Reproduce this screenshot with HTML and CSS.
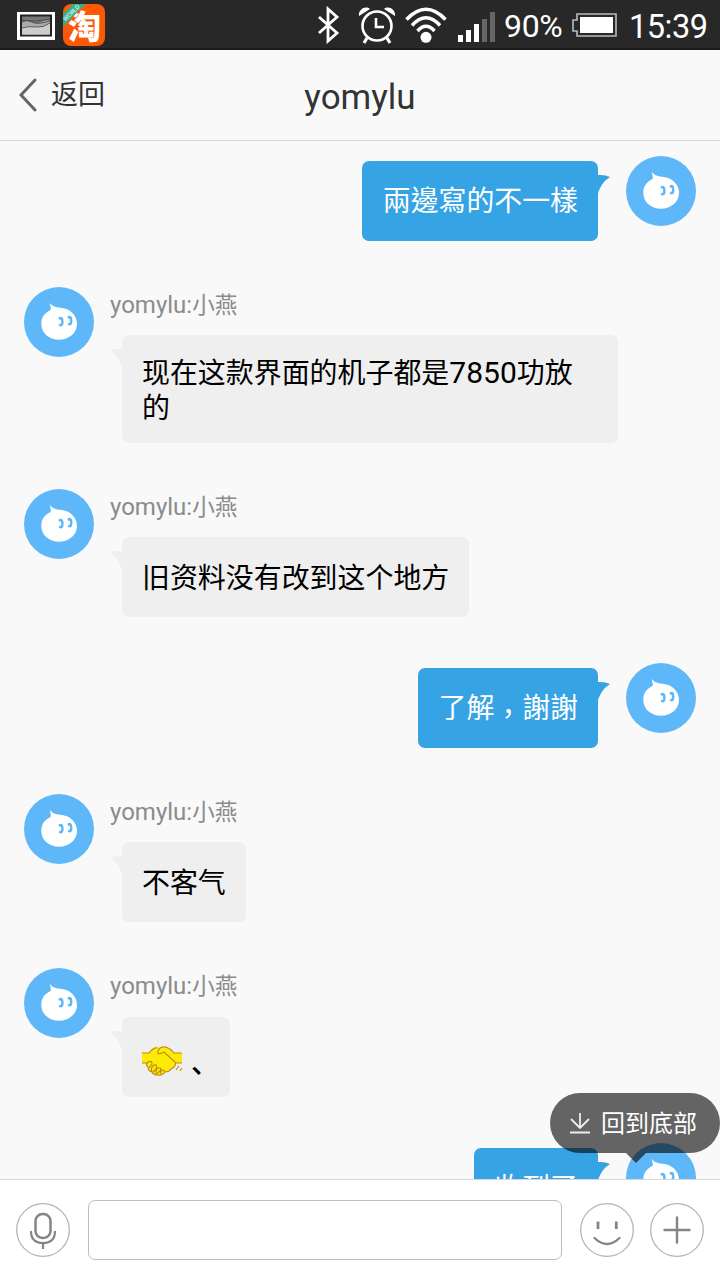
FILE: index.html
```
<!DOCTYPE html>
<html lang="zh-CN">
<head>
<meta charset="utf-8">
<title>yomylu</title>
<link rel="stylesheet" href="styles.css">
</head>
<body>
<svg class="defs" aria-hidden="true">
  <symbol id="avatar" viewBox="0 0 70 70">
    <circle cx="35" cy="35" r="35" fill="#5eb7f8"/>
    <path d="M25.700 16C29 20 33 20.500 38 21C47 22 53 29 53 37C53 46 45 52.700 35 52.700C25 52.700 17.300 46 17.300 37C17.300 30 20.500 26 26.500 23C27.500 21 26 18 25.700 16Z" fill="#fff"/>
    <path d="M35 32Q38.200 29.200 38.400 34.500T35.200 37.500M44 31Q47 28.400 47.200 33.500T44.300 36.500" fill="none" stroke="#5eb7f8" stroke-width="2.500"/>
  </symbol>
  <symbol id="tail-left" viewBox="0 0 13 24"><path d="M0 1.500Q5-.5 13 0V24Q10 7 0 1.500Z" fill="#efefef"/></symbol>
  <symbol id="tail-right" viewBox="0 0 13 24"><path d="M0 0Q8-.3 13 2Q3 8 0 22Z" fill="#35a3e4"/></symbol>
</svg>
<div class="screen">
  <div class="status">
    <svg class="picture" width="38" height="28" viewBox="0 0 38 28"><path d="M0 0h38v28H0z" fill="#fff"/><path d="M3 2.500h32v22H3z" fill="#222"/><path d="M5 4.500h28v18H5z" fill="#777"/><path d="M5 10q5-3 10 0t10 0 8-1v13.500H5z" fill="#aaa"/><path d="M5 16q7-2 14-1t14-4v11.500H5z" fill="#ccc"/><path d="M5 8q8 1 12 1t16-2M5 10q5-3 10 0t18-1M5 16q7-2 14-1t14-4" fill="none" stroke="#444" stroke-width=".8"/></svg>
    <div class="app"><span class="glyph">淘</span><span class="ribbon">WORLD</span></div>
    <svg class="bluetooth" width="22" height="38" viewBox="0 0 22 38" fill="none" stroke="#fff" stroke-width="2.800"><path d="M1 11L19 27 10 35V3L19 11 1 27"/></svg>
    <svg class="alarm" width="38" height="38" viewBox="0 0 38 38" fill="none" stroke="#fff"><circle cx="19" cy="20" r="14.500" stroke-width="2.600"/><path d="M18 12v9h8" stroke-width="2.600"/><path d="M9 32l-3 5M29 32l3 5" stroke-width="3.200"/><path d="M1 10C0 4 7-1 12 3ZM37 10C38 4 31-1 26 3Z" fill="#fff" stroke="none"/></svg>
    <svg class="wifi" width="42" height="36" viewBox="0 0 42 36" fill="none" stroke="#fff" stroke-width="3.500"><path d="M1.500 12.500Q21-8 40.500 12.500M7 18.500Q21 3 35 18.500M12.500 24Q21 14.500 29.500 24"/><circle cx="21" cy="30.300" r="5.500" fill="#fff" stroke="none"/></svg>
    <svg class="signal" width="38" height="30" viewBox="0 0 38 30"><path d="M0 23h5v7H0zM8 18h5v12H8zM16 12h5v18h-5z" fill="#fff"/><path d="M24 7h5v23h-5zM32 0h5v30h-5z" fill="#666"/></svg>
    <span class="percent">90%</span>
    <svg class="battery" width="46" height="24" viewBox="0 0 46 24"><path d="M5 1h39v22H5v-5H1V7h4z" fill="none" stroke="#bbb" stroke-width="1.600"/><path d="M8 4h33v16H8z" fill="#fff"/></svg>
    <span class="time">15:39</span>
  </div>
  <div class="header">
    <div class="back"><svg width="18" height="34" viewBox="0 0 18 34"><path d="M16 2L2 17L16 32" fill="none" stroke="#666" stroke-width="3" stroke-linecap="round"/></svg><span>返回</span></div>
    <div class="title">yomylu</div>
  </div>
  <div class="chat">
    <div class="row own"><div class="bubble" lang="zh-TW">兩邊寫的不一樣<svg class="tail"><use href="#tail-right"/></svg></div><svg class="avatar"><use href="#avatar"/></svg></div>
    <div class="row"><svg class="avatar"><use href="#avatar"/></svg><div class="message"><div class="name">yomylu:<span>小燕</span></div><div class="bubble long">现在这款界面的机子都是<span class="number">7850</span>功放的<svg class="tail"><use href="#tail-left"/></svg></div></div></div>
    <div class="row"><svg class="avatar"><use href="#avatar"/></svg><div class="message"><div class="name">yomylu:<span>小燕</span></div><div class="bubble">旧资料没有改到这个地方<svg class="tail"><use href="#tail-left"/></svg></div></div></div>
    <div class="row own"><div class="bubble" lang="zh-TW">了解<span class="comma">，</span>謝謝<svg class="tail"><use href="#tail-right"/></svg></div><svg class="avatar"><use href="#avatar"/></svg></div>
    <div class="row"><svg class="avatar"><use href="#avatar"/></svg><div class="message"><div class="name">yomylu:<span>小燕</span></div><div class="bubble">不客气<svg class="tail"><use href="#tail-left"/></svg></div></div></div>
    <div class="row emoji-row"><svg class="avatar"><use href="#avatar"/></svg><div class="message"><div class="name">yomylu:<span>小燕</span></div><div class="bubble"><svg class="shake" width="42" height="32" viewBox="0 0 42 32"><path d="M0 8H7Q12 2 15 2L25 3Q29 4 32 8H40V18H34Q34 22 29 24Q27 27 23 27Q20 31 16 30Q11 30 10 27Q6 26 6 22Q3 20 5 18H0Z" fill="#fdeb06"/><path d="M0 8H7Q12 2 15 3M0 18H5M16 9Q15 5 19 2.500Q22 1 26 3Q29 4 32 8H40M40 18H34M16 8.500Q19 9 22 7L33 17Q35 21 29 24Q27 27 23 27Q20 31 16 30Q11 30 10 27Q6 26 6 22Q3 20 6 17Q10 15 10 19L7 23M10 27Q8 23 12 20Q16 19 14 24L11 27M14 29Q13 25 16 23Q20 22 18 26L15 29M19 29Q18 26 20 25Q23 25 22 27M34 25l3-4M38 26l2-3" fill="none" stroke="#bd8a14" stroke-width="1.100"/></svg><span class="mark">、</span><svg class="tail"><use href="#tail-left"/></svg></div></div></div>
    <div class="row own"><div class="bubble" lang="zh-TW">收到了<svg class="tail"><use href="#tail-right"/></svg></div><svg class="avatar"><use href="#avatar"/></svg></div>
  </div>
  <div class="bottom-tip">
    <svg width="22" height="22" viewBox="0 0 22 22" fill="none" stroke="#eee" stroke-width="1.800"><path d="M11 1V16M2 7L11 16L20 7M1 20.500H21"/></svg><span>回到底部</span>
  </div>
  <div class="composer">
    <svg class="tool" viewBox="0 0 54 54" fill="none" stroke="#858585" stroke-width="2.200"><circle cx="27" cy="27" r="26.300" stroke="#b5b5b5" stroke-width="1.300"/><rect x="19.500" y="11" width="15" height="24" rx="7" stroke-width="2.500"/><path d="M15 28Q15 40 27 40T39 28M27 40v6"/></svg>
    <div class="field"></div>
    <svg class="tool" viewBox="0 0 54 54" fill="none" stroke="#858585" stroke-width="2.800"><circle cx="27" cy="27" r="26.300" stroke="#b5b5b5" stroke-width="1.300"/><path d="M18 18.500v7.500M36.300 18.500v7.500"/><path d="M14.500 35Q27 47 39.500 35" stroke-linecap="round" stroke-width="2.400"/></svg>
    <svg class="tool plus" viewBox="0 0 54 54" fill="none" stroke="#858585" stroke-width="2.400"><circle cx="27" cy="27" r="26.300" stroke="#b5b5b5" stroke-width="1.300"/><path d="M14.500 27h25M27 14.500v25" stroke-linecap="round"/></svg>
  </div>
</div>
</body>
</html>
```
FILE: styles.css
```
* { box-sizing: border-box; }
body { margin: 0; font-family: Roboto, "Noto Sans CJK SC", sans-serif; }
svg { display: block; flex: none; }
.defs { position: absolute; width: 0; height: 0; }
.screen { position: relative; width: 720px; height: 1280px; display: flex; flex-direction: column; overflow: hidden; background: #f9f9f9; }

.status { height: 50px; flex: none; display: flex; align-items: center; padding: 0 0 0 17px; background: #282828; border-bottom: 2px solid #1b1b1b; color: #fff; font-size: 32.500px; white-space: nowrap; }
.picture { margin-top: 3px; }
.app { position: relative; flex: none; width: 42px; height: 42px; margin: 2px 0 0 8px; overflow: hidden; border-radius: 8px; background: #fd5805; }
.glyph { display: block; margin: 1px 0 0 5px; font: 900 33px/41px "Noto Sans CJK SC", sans-serif; }
.ribbon { position: absolute; left: -17px; top: 4px; width: 50px; height: 9px; background: #37af8d; font-size: 6px; line-height: 9px; text-align: center; transform: rotate(-45deg); }
.bluetooth { margin: 2px 0 0 213px; }
.alarm { margin: 2px 0 0 18px; }
.wifi { margin: 2px 0 0 9px; }
.signal { margin: 5px 0 0 11px; }
.percent { flex: none; width: 59px; margin: 4px 0 0 8px; font-size: 32px; letter-spacing: -.3px; }
.battery { margin: 2px 0 0 9px; }
.time { margin: 5px 0 0 11px; letter-spacing: -.5px; }

.header { position: relative; height: 91px; flex: none; display: flex; align-items: center; justify-content: center; background: #f9f9f9; border-bottom: 1px solid #d7d7d7; }
.back { position: absolute; left: 19px; top: 28px; display: flex; align-items: center; gap: 14px; color: #333; font-size: 27px; line-height: 34px; }
.title { margin-top: 4px; color: #333; font-size: 35px; }

.chat { flex: 1; min-height: 0; overflow: hidden; display: flex; flex-direction: column; gap: 46px; padding: 15px 24px 0; }
.row { display: flex; flex: none; align-items: flex-start; gap: 16px; }
.own { justify-content: flex-end; gap: 28px; }
.emoji-row .name { height: 49px; }
.avatar { width: 70px; height: 70px; }
.message { display: flex; flex-direction: column; align-items: flex-start; }
.name { height: 48px; padding-top: 4px; color: #8b8b8b; font-size: 24px; line-height: 28px; }
.name span { font-size: 22.600px; }
.bubble { position: relative; max-width: 496px; height: 80px; margin-left: 12px; padding: 24px 20px 0; border-radius: 7px; background: #efefef; color: #000; font-size: 27.950px; line-height: 35px; }
.bubble.long { height: 108px; padding: 21px 21px 0 20px; }
.number { font-size: 30px; line-height: 30px; }
.comma { display: inline-block; transform: translateY(6px); }
.own .bubble { margin: 5px 0 0; padding: 23px 20px 0 20.500px; background: #35a3e4; color: #fff; font-size: 27.900px; font-family: Roboto, "Noto Sans CJK TC", sans-serif; }
.tail { position: absolute; left: -12px; top: 14px; width: 13px; height: 24px; }
.own .tail { left: auto; right: -12px; }
.emoji-row .bubble { display: flex; width: 108px; }
.shake { margin-top: 4px; }
.mark { margin: 5px 0 0 7px; font-weight: 500; }

.bottom-tip { position: absolute; left: 550px; top: 1093px; width: 170px; height: 60px; display: flex; align-items: center; gap: 10px; padding-left: 19px; border-radius: 30px; background: rgba(0, 0, 0, .6); color: #fff; font-size: 24px; white-space: nowrap; }
.bottom-tip span { margin-top: -4px; }
.bottom-tip::after { content: ""; position: absolute; left: 76px; top: 60px; border: solid transparent; border-width: 10px 10px 0; border-top-color: rgba(0, 0, 0, .6); }

.composer { height: 101px; flex: none; display: flex; align-items: center; padding: 0 16px; background: #fff; border-top: 1px solid #d7d7d7; }
.tool { width: 54px; height: 54px; }
.field { width: 474px; height: 60px; margin: 0 18px; border: 1px solid #bdbdbd; border-radius: 7px; background: #fff; }
.plus { margin-left: 16px; }
```
